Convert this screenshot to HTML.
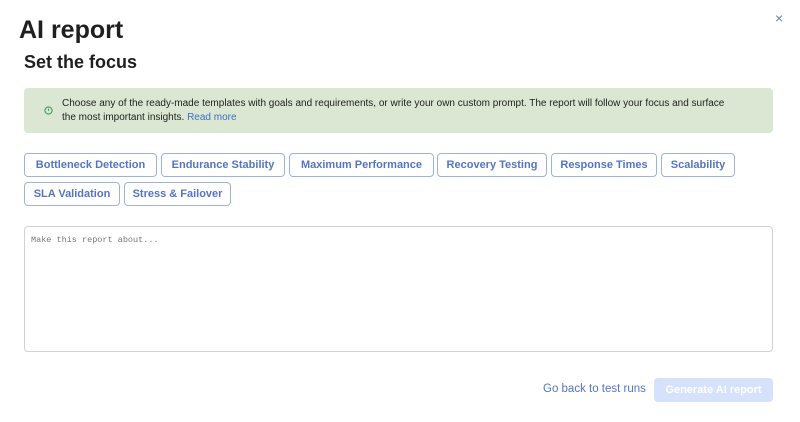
<!DOCTYPE html>
<html><head><style>
body{margin:0;width:800px;height:422px;background:#fff;font-family:"Liberation Sans",sans-serif;position:relative;overflow:hidden}
.a{position:absolute}
h1{position:absolute;left:19px;top:16px;margin:0;font-size:25px;font-weight:bold;color:#1f1f1f}
h2{position:absolute;left:24px;top:52px;margin:0;font-size:18px;font-weight:bold;color:#1f1f1f}
.banner{left:24px;top:88px;width:749px;height:45px;background:#dbe7d2;border-radius:4px}
.banner p{position:absolute;left:38px;top:9px;margin:0;font-size:10px;line-height:14px;color:#222;width:682px}
.chip{position:absolute;height:24px;border:1px solid #9fb3da;border-radius:4px;box-sizing:border-box;color:#5575c4;font-size:11px;font-weight:bold;display:flex;align-items:center;justify-content:center;white-space:nowrap}
.ta{left:24px;top:226px;width:749px;height:126px;border:1px solid #cfd3d8;border-radius:4px;box-sizing:border-box}
.ta span{position:absolute;left:6px;top:8px;font-family:"Liberation Mono",monospace;font-size:8.5px;color:#777}
</style></head><body>
<h1>AI report</h1>
<div class="a" style="left:775px;top:10px;color:#6b7fa8;font-size:14px">×</div>
<h2>Set the focus</h2>
<div class="a banner">
<svg class="a" style="left:20px;top:18px" width="9" height="9" viewBox="0 0 10 10"><circle cx="5" cy="5" r="4" fill="none" stroke="#3c9a5f" stroke-width="1.2"/><path d="M5 3v2.5" stroke="#3c9a5f" stroke-width="1.2"/></svg>
<p>Choose any of the ready-made templates with goals and requirements, or write your own custom prompt. The report will follow your focus and surface<br>the most important insights. <span style="color:#3d6fc4">Read more</span></p>
</div>
<div class="chip" style="left:24px;top:153px;width:133px">Bottleneck Detection</div>
<div class="chip" style="left:161px;top:153px;width:124px">Endurance Stability</div>
<div class="chip" style="left:289px;top:153px;width:145px">Maximum Performance</div>
<div class="chip" style="left:437px;top:153px;width:110px">Recovery Testing</div>
<div class="chip" style="left:551px;top:153px;width:106px">Response Times</div>
<div class="chip" style="left:661px;top:153px;width:74px">Scalability</div>
<div class="chip" style="left:24px;top:182px;width:96px">SLA Validation</div>
<div class="chip" style="left:124px;top:182px;width:107px">Stress &amp; Failover</div>
<div class="a ta"><span>Make this report about...</span></div>
<div class="a" style="left:543px;top:383px;font-size:11.5px;color:#5575c4">Go back to test runs</div>
<div class="a" style="left:654px;top:378px;width:119px;height:24px;background:#d6e1fb;border-radius:4px;color:#fff;font-size:11px;font-weight:bold;display:flex;align-items:center;justify-content:center">Generate AI report</div>
</body></html>
